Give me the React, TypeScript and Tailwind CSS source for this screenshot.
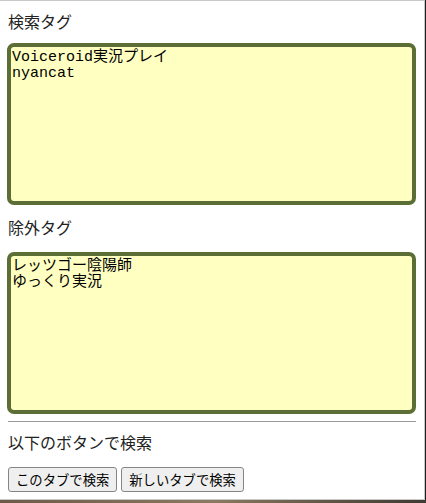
import React from 'react';

const jp = '"Noto Sans CJK JP", "Noto Sans", sans-serif';
const mono = '"Liberation Mono", "Noto Sans CJK JP", monospace';

const TagBox = ({ value }: { value: string }) => (
  <textarea
    defaultValue={value}
    spellCheck={false}
    className="block w-[409px] h-[162px] ml-[7px] resize-none rounded-[7px] border-[4px] border-[#5b6e35] bg-[#ffffc2] px-[1px] pt-[3px] pb-0 text-[15px] leading-[16px] text-black outline-none"
    style={{ fontFamily: mono }}
  />
);

const App = () => {
  return (
    <div className="w-[426px] h-[503px] flex flex-col bg-[#1e1e1e] overflow-hidden">
      <div className="flex h-[500px] shrink-0">
        <div
          className="w-[425px] h-[500px] bg-white border-t border-r border-b border-[#c8c8c8] text-[16px] text-[#222]"
          style={{ fontFamily: jp }}
        >
          <div className="pl-[8px] pt-[9px] h-[42px] leading-[22px]">検索タグ</div>
          <TagBox value={'Voiceroid実況プレイ\nnyancat'} />
          <div className="pl-[8px] pt-[11px] h-[47px] leading-[22px]">除外タグ</div>
          <TagBox value={'レッツゴー陰陽師\nゆっくり実況'} />
          <div className="mx-[8px] mt-[7px] border-t border-[#9a9a9a]" />
          <div className="pl-[8px] pt-[9px] h-[45px] leading-[22px]">以下のボタンで検索</div>
          <div className="flex gap-[4px] pl-[8px]">
            <button className="h-[25px] px-[7px] rounded-[3px] border border-[#858585] bg-[#efefef] text-[13.33px] leading-none text-black">
              このタブで検索
            </button>
            <button className="h-[25px] px-[7px] rounded-[3px] border border-[#858585] bg-[#efefef] text-[13.33px] leading-none text-black">
              新しいタブで検索
            </button>
          </div>
        </div>
      </div>
      <div className="h-[3px] shrink-0 bg-gradient-to-r from-[#6b5a48] via-[#8a7a60] to-[#3f3a33]" />
    </div>
  );
};

export default App;
